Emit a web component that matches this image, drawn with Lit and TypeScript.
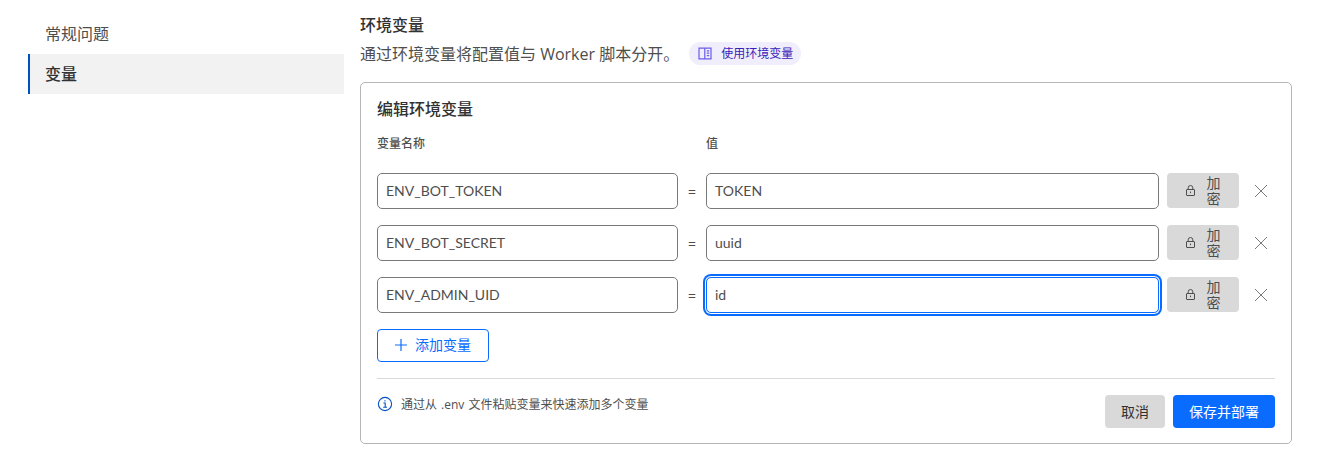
import { LitElement, css, html } from 'lit'
import { customElement } from 'lit/decorators.js'

const rows = [
   { name: 'ENV_BOT_TOKEN', value: 'TOKEN', focused: false },
   { name: 'ENV_BOT_SECRET', value: 'uuid', focused: false },
   { name: 'ENV_ADMIN_UID', value: 'id', focused: true },
]

const lockIcon = html`<svg class="lock" width="9" height="11" viewBox="0 0 9 11" fill="none" stroke="currentColor" stroke-width="1">
   <rect x="0.5" y="4.5" width="8" height="6" rx="0.5"></rect>
   <path d="M2.2 4.5V2.8a2.3 2.3 0 0 1 4.6 0v1.7"></path>
   <path d="M4.5 6.6v1.6"></path>
</svg>`

const closeIcon = html`<svg width="14" height="14" viewBox="0 0 14 14" fill="none" stroke="#797979" stroke-width="1">
   <path d="M1 1l12 12M13 1L1 13"></path>
</svg>`

@customElement('app-root')
export class AppRoot extends LitElement {
   static styles = css`
      :host {
         display: block;
         width: 1323px;
         height: 454px;
         overflow: hidden;
         background: #fff;
         color: #36393a;
         font-family: 'Open Sans', 'Noto Sans CJK SC', sans-serif;
         font-size: 14px;
      }

      .page {
         display: flex;
         align-items: flex-start;
         gap: 16px;
         padding-left: 28px;
      }

      /* left nav */
      .nav {
         width: 316px;
         flex: none;
         padding-top: 14px;
      }

      .nav-item {
         height: 40px;
         line-height: 40px;
         padding-left: 17px;
         font-size: 16px;
         color: #4e4e4e;
      }

      .nav-item.active {
         background: #f2f2f2;
         border-left: 2px solid #0051c3;
         padding-left: 15px;
         color: #313131;
         font-weight: 500;
      }

      /* main column */
      .main {
         width: 932px;
         flex: none;
         padding-top: 14px;
      }

      h2 {
         margin: 0;
         font-size: 16px;
         line-height: 22px;
         font-weight: 500;
         color: #313131;
      }

      .desc {
         display: flex;
         align-items: center;
         height: 24px;
         margin-top: 5px;
         font-size: 16px;
         color: #4e4e4e;
      }

      .pill {
         display: inline-flex;
         align-items: center;
         gap: 9px;
         height: 23px;
         margin-left: 10px;
         padding: 0 8px 0 9px;
         border-radius: 12px;
         background: #f0eefc;
         color: #3a22b8;
         font-size: 12px;
      }

      .card {
         margin-top: 17px;
         height: 362px;
         box-sizing: border-box;
         padding: 15px 16px 16px;
         border: 1px solid #b6b6b6;
         border-radius: 5px;
      }

      h3 {
         margin: 0;
         font-size: 16px;
         line-height: 22px;
         font-weight: 500;
         color: #313131;
      }

      .grid {
         display: grid;
         grid-template-columns: 301px 28px 453px 80px 44px;
         row-gap: 16px;
         align-items: center;
         margin-top: 15px;
      }

      .label {
         font-size: 12px;
         line-height: 18px;
         font-weight: 500;
         color: #4e4e4e;
         margin-bottom: 4px;
      }

      .field {
         height: 36px;
         box-sizing: border-box;
         display: flex;
         align-items: center;
         padding: 0 8px 2px;
         border: 1px solid #797979;
         border-radius: 5px;
         font-family: Lato, 'Noto Sans CJK SC', sans-serif;
         font-size: 14px;
         color: #4e4e4e;
      }

      .field.focused {
         border-color: #0a6cff;
         box-shadow: 0 0 0 1px #fff, 0 0 0 3px #0a6cff;
      }

      .eq {
         text-align: center;
         color: #4e4e4e;
      }

      .encrypt {
         display: flex;
         align-items: center;
         justify-content: center;
         gap: 12px;
         align-self: start;
         margin-left: 8px;
         width: 72px;
         height: 35px;
         border-radius: 4px;
         background: #d9d9d9;
         color: #4e4e4e;
         font-size: 14px;
         line-height: 16px;
      }

      .encrypt .txt {
         width: 14px;
         text-align: center;
      }

      .remove {
         display: flex;
         justify-content: center;
      }

      .add {
         display: flex;
         align-items: center;
         gap: 7px;
         box-sizing: border-box;
         width: 112px;
         height: 33px;
         margin-top: 16px;
         padding: 0 0 3px 16px;
         border: 1px solid #0a6cff;
         border-radius: 4px;
         color: #0a6cff;
         font-size: 14px;
      }

      .add svg {
         margin-top: 2px;
      }

      .footer {
         display: flex;
         justify-content: space-between;
         margin-top: 16px;
         padding-top: 16px;
         border-top: 1px solid #d9d9d9;
      }

      .note {
         display: flex;
         align-items: center;
         gap: 8px;
         height: 18px;
         font-size: 12px;
         word-spacing: 1px;
         color: #4e4e4e;
      }

      .actions {
         display: flex;
         gap: 8px;
      }

      .btn {
         height: 33px;
         box-sizing: border-box;
         padding-bottom: 2px;
         display: flex;
         align-items: center;
         justify-content: center;
         border-radius: 4px;
         font-size: 14px;
      }

      .btn.cancel {
         width: 60px;
         background: #d9d9d9;
         color: #313131;
      }

      .btn.save {
         width: 102px;
         background: #0a6cff;
         color: #fff;
      }
   `

   render() {
      return html`
         <div class="page">
            <nav class="nav">
               <div class="nav-item">常规问题</div>
               <div class="nav-item active">变量</div>
            </nav>
            <section class="main">
               <h2>环境变量</h2>
               <div class="desc">
                  通过环境变量将配置值与 Worker 脚本分开。
                  <span class="pill">
                     <svg width="14" height="13" viewBox="0 0 14 13" fill="none" stroke="#6a5ce8" stroke-width="1.2">
                        <path d="M1 1.2h5.8v10.6H1zM6.8 1.2H13v10.6H6.8M8.8 3.8h2.4M8.8 6.2h2.4M8.8 8.6h2.4"></path>
                     </svg>
                     使用环境变量
                  </span>
               </div>
               <div class="card">
                  <h3>编辑环境变量</h3>
                  <div class="grid">
                     <div class="label">变量名称</div>
                     <div></div>
                     <div class="label">值</div>
                     <div></div>
                     <div></div>
                     ${rows.map(r => html`
                        <div class="field">${r.name}</div>
                        <div class="eq">=</div>
                        <div class="field ${r.focused ? 'focused' : ''}">${r.value}</div>
                        <div class="encrypt">${lockIcon}<span class="txt">加密</span></div>
                        <div class="remove">${closeIcon}</div>
                     `)}
                  </div>
                  <div class="add">
                     <svg width="14" height="14" viewBox="0 0 14 14" fill="none" stroke="#0a6cff" stroke-width="1.2">
                        <path d="M7 1v12M1 7h12"></path>
                     </svg>
                     添加变量
                  </div>
                  <div class="footer">
                     <div class="note">
                        <svg width="16" height="16" viewBox="0 0 16 16" fill="none" stroke="#0051c3" stroke-width="1.1">
                           <circle cx="8" cy="8" r="6.6"></circle>
                           <path d="M6.4 7h1.8v4.2M6.2 11.3h3.8M7.9 4.2v1.2"></path>
                        </svg>
                        通过从 .env 文件粘贴变量来快速添加多个变量
                     </div>
                     <div class="actions">
                        <div class="btn cancel">取消</div>
                        <div class="btn save">保存并部署</div>
                     </div>
                  </div>
               </div>
            </section>
         </div>
      `
   }
}
